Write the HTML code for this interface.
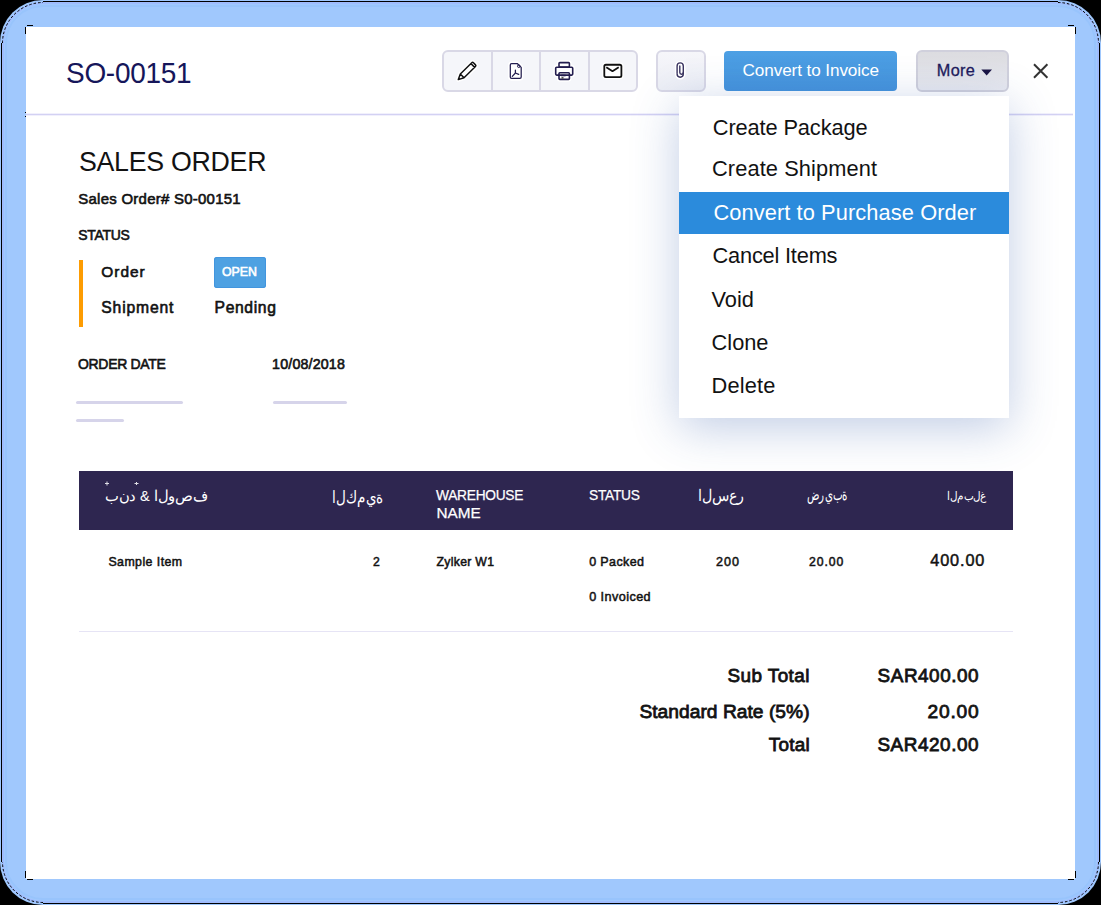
<!DOCTYPE html>
<html><head><meta charset="utf-8"><style>
html,body{margin:0;padding:0}
body{width:1101px;height:905px;position:relative;overflow:hidden;background:#000;font-family:"Liberation Sans",sans-serif}
.t{position:absolute;white-space:nowrap;line-height:1;transform-origin:0 0}
.ar{position:absolute;white-space:nowrap;line-height:1;color:#fff;direction:ltr;unicode-bidi:bidi-override;transform-origin:0 0}
.frame{position:absolute;left:0;top:0;width:1101px;height:905px;border-radius:43px;background:#a0c8fd}
.ln{position:absolute;background:#000}
.white{position:absolute;left:26px;top:27px;width:1049px;height:852px;background:#fff}
.sep{position:absolute;left:26px;top:114px;width:1047px;height:1px;background:#d3d1f3;box-shadow:0 1px 0 #f1f0fc,0 -1px 0 #f1f0fc}
.grp{position:absolute;box-sizing:border-box;left:442px;top:50px;width:196px;height:42px;border:2px solid #d9d8e6;border-radius:6px;background:#f5f6fa}
.dv{position:absolute;top:51px;width:2px;height:40px;background:#d9d8e6}
.attach{position:absolute;box-sizing:border-box;left:656px;top:50px;width:50px;height:42px;border:2px solid #d9d8e6;border-radius:6px;background:linear-gradient(#f6f6fa,#eceef5)}
.conv{position:absolute;left:724px;top:51px;width:173px;height:40px;border-radius:4px;background:linear-gradient(#4da0e4,#4593dc)}
.more{position:absolute;box-sizing:border-box;left:916px;top:50px;width:93px;height:42px;border:2px solid #d0d0dc;border-radius:6px;background:linear-gradient(#dcdce0,#e9eaf1)}
.dd{position:absolute;left:679px;top:96px;width:330px;height:322px;background:#fff;box-shadow:0 10px 44px rgba(50,90,170,0.30)}
.hl{position:absolute;left:679px;top:192px;width:330px;height:42px;background:#2b8bdc}
.thead{position:absolute;left:79px;top:471px;width:934px;height:59px;background:#2e2650}
.rowline{position:absolute;left:79px;top:631px;width:934px;height:1px;background:#e6e4f5}
.orange{position:absolute;left:78.5px;top:260px;width:4px;height:67px;background:#fd9c02}
.badge{position:absolute;left:214px;top:257px;width:52px;height:31px;border-radius:3px;background:#4ea1e2;box-shadow:inset 0 0 0 1px #4295de}
.ph{position:absolute;height:3px;border-radius:2px;background:#d6d4ea}
</style></head><body>
<svg style="position:absolute;left:0;top:0" width="1101" height="905">
<rect x="0" y="0" width="1101" height="905" rx="43" ry="43" fill="#a0c8fd"/>
<rect x="3" y="3" width="1095" height="899" rx="40" ry="40" fill="none" stroke="#9fbcfd" stroke-width="2"/>
<rect x="6" y="6" width="1089" height="893" rx="37" ry="37" fill="none" stroke="#98c4fc" stroke-width="2"/>
<g fill="#000">
<rect x="43" y="1" width="1015" height="1"/><rect x="43" y="903" width="1015" height="1"/>
<rect x="1" y="43" width="1" height="819"/><rect x="1099" y="43" width="1" height="819"/>
<rect x="27" y="25" width="6" height="1"/><rect x="25" y="27" width="1" height="7"/>
<rect x="1068" y="25" width="6" height="1"/><rect x="1075" y="27" width="1" height="7"/>
<rect x="27" y="879" width="6" height="1"/><rect x="25" y="871" width="1" height="7"/>
<rect x="1068" y="879" width="6" height="1"/><rect x="1075" y="871" width="1" height="7"/>
</g>
<g fill="none" stroke="#000" stroke-width="1" stroke-dasharray="2.5 2">
<path d="M2.5 43 A40.5 40.5 0 0 1 43 2.5"/><path d="M1058 2.5 A40.5 40.5 0 0 1 1098.5 43"/>
<path d="M1098.5 862 A40.5 40.5 0 0 1 1058 902.5"/><path d="M43 902.5 A40.5 40.5 0 0 1 2.5 862"/>
</g>
</svg>
<div class="white"></div>
<div class="sep"></div>
<div class="ln" style="position:absolute;background:#000;left:25px;top:112px;width:1px;height:1px"></div><div class="ln" style="position:absolute;background:#000;left:25px;top:116px;width:1px;height:1px"></div>
<div class="grp"></div>
<div class="dv" style="left:491px"></div>
<div class="dv" style="left:539px"></div>
<div class="dv" style="left:588px"></div>
<div class="attach"></div>
<div class="conv"></div>
<div class="more"></div>
<div class="dd"></div>
<div class="hl"></div>
<div class="orange"></div>
<div class="badge"></div>
<div class="ph" style="left:76px;top:401px;width:107px"></div>
<div class="ph" style="left:76px;top:419px;width:48px"></div>
<div class="ph" style="left:273px;top:401px;width:74px"></div>
<div class="thead"></div>
<div class="rowline"></div>
<svg style="position:absolute;left:0;top:0" width="1101" height="905">
<defs>
<g id="pencil"><g transform="translate(458.3,79.6) rotate(-44.3)">
<path d="M0 0 L5.4 -2.65 H21.4 Q22.6 -2.65 22.6 -1.45 V1.45 Q22.6 2.65 21.4 2.65 H5.4 Z M5.4 -2.65 V2.65 M20.2 -2.65 V2.65"/>
</g></g>
<g id="pdf">
<path d="M510.3 65 Q510.3 63.7 511.6 63.7 H517.5 L521.2 67.4 V77.1 Q521.2 78.4 519.9 78.4 H511.6 Q510.3 78.4 510.3 77.1 Z"/>
<path d="M515.4 70 V73 L512.3 76.4 M515.4 73 L518.7 74.4"/>
</g>
<g id="printer">
<rect x="559" y="62.6" width="10.4" height="4.5" rx="0.8"/>
<rect x="555.7" y="67.2" width="17" height="7.9" rx="1"/>
<rect x="559" y="72.7" width="10.4" height="6.7" rx="0.8"/>
<path d="M561.2 75.5 H565.6"/>
</g>
<g id="mail">
<rect x="604.3" y="64.75" width="17.1" height="12.35" rx="1.6"/>
<path d="M606.3 67.3 L612.5 71.2 L618.7 67.3"/>
</g>
<g id="clip">
<path d="M677.1 73.5 V66 A3.1 3.1 0 0 1 683.3 66 V74.1 A3.1 3.1 0 0 1 677.1 74.1"/>
<path d="M679.8 66 V72.5 A1.75 1.75 0 0 0 683.3 72.5"/>
</g>
</defs>
<!-- halos -->
<g fill="none" stroke="#fff" stroke-width="4.5" stroke-linejoin="round" stroke-linecap="round">
<use href="#pencil"/><use href="#pdf"/><use href="#printer"/><use href="#mail"/><use href="#clip"/>
</g>
<g fill="#fff" stroke="none">
<use href="#pencil"/><use href="#pdf"/><use href="#printer"/><use href="#mail"/><use href="#clip"/>
</g>
<g fill="none" stroke="#111" stroke-width="1.5" stroke-linejoin="round"><use href="#pencil"/></g>
<g fill="none" stroke="#231d4f" stroke-width="1.25" stroke-linejoin="round" stroke-linecap="round"><use href="#pdf"/></g>
<circle cx="518.8" cy="66.2" r="1.3" fill="none" stroke="#231d4f" stroke-width="1"/>
<g fill="none" stroke="#231d4f" stroke-width="1.6" stroke-linejoin="round"><use href="#printer"/></g>
<rect x="561.5" y="77" width="2" height="1.8" fill="#555"/>
<g fill="none" stroke="#111" stroke-width="1.8" stroke-linejoin="round"><use href="#mail"/></g>
<g fill="none" stroke="#3a3460" stroke-width="1.4" stroke-linecap="round"><use href="#clip"/></g>
<!-- caret -->
<path d="M981.3 69.4 H992 L986.65 75.4 Z" fill="#1a1545"/>
<!-- close -->
<g stroke="#333" stroke-width="2" stroke-linecap="butt">
<path d="M1034 64.3 L1047.4 77.7 M1047.4 64.3 L1034 77.7"/>
</g>
</svg>

<div class="ar" id="a1" style="left:105.34px;top:489.42px;font-size:17px;transform:scale(0.8602,0.8765)">ب‌ن‌د‌ ‌&‌ ‌ا‌ل‌و‌ص‌ف</div><div class="ar" id="a2" style="left:331.60px;top:488.89px;font-size:17px;transform:scale(0.8000,1.0059)">ا‌ل‌ك‌م‌ي‌ة</div><div class="ar" id="a3" style="left:697.79px;top:487.59px;font-size:17px;transform:scale(0.8111,0.9118)">ا‌ل‌س‌ع‌ر</div><div class="ar" id="a4" style="left:806.87px;top:485.72px;font-size:14px;transform:scale(0.7315,1.1364)">ض‌ر‌ي‌ب‌ة</div><div class="ar" id="a5" style="left:946.68px;top:490.27px;font-size:14px;transform:scale(0.7245,0.8333)">ا‌ل‌م‌ب‌ل‌غ</div><svg style="position:absolute;left:0;top:0" width="1101" height="905"><g stroke="#fff" stroke-width="1" opacity="0.85"><path d="M105 483.5 H109 M107 481.5 V485.5 M134.5 483.5 H138.5 M136.5 482 V485"/></g></svg>
<div class="t" style="left:65.70px;top:57.88px;font-size:29.80px;color:#16165a;letter-spacing:-0.300px;transform:scaleX(0.9391);">SO-00151</div><div class="t" style="left:78.50px;top:147.48px;font-size:28.49px;color:#121212;letter-spacing:-0.300px;transform:scaleX(0.9392);">SALES ORDER</div><div class="t" style="left:78.30px;top:191.63px;font-size:14.97px;color:#121212;letter-spacing:0.256px;-webkit-text-stroke:0.6px #121212;">Sales Order# S0-00151</div><div class="t" style="left:78.30px;top:228.89px;font-size:13.95px;color:#121212;letter-spacing:-0.273px;-webkit-text-stroke:0.6px #121212;">STATUS</div><div class="t" style="left:101.30px;top:264.26px;font-size:15.41px;color:#121212;letter-spacing:1.000px;-webkit-text-stroke:0.6px #121212;">Order</div><div class="t" style="left:222.00px;top:266.14px;font-size:12.35px;color:#fff;letter-spacing:-0.004px;-webkit-text-stroke:0.6px #fff;">OPEN</div><div class="t" style="left:101.30px;top:300.41px;font-size:15.70px;color:#121212;letter-spacing:0.840px;-webkit-text-stroke:0.6px #121212;">Shipment</div><div class="t" style="left:214.60px;top:300.41px;font-size:15.70px;color:#121212;letter-spacing:0.615px;-webkit-text-stroke:0.6px #121212;">Pending</div><div class="t" style="left:78.00px;top:356.64px;font-size:14.24px;color:#121212;letter-spacing:-0.300px;-webkit-text-stroke:0.6px #121212;transform:scaleX(0.9807);">ORDER DATE</div><div class="t" style="left:272.10px;top:356.64px;font-size:14.24px;color:#121212;letter-spacing:0.168px;-webkit-text-stroke:0.6px #121212;">10/08/2018</div><div class="t" style="left:742.50px;top:61.58px;font-size:17.15px;color:#fff;letter-spacing:-0.096px;">Convert to Invoice</div><div class="t" style="left:936.75px;top:62.32px;font-size:16.28px;color:#1d1a5c;letter-spacing:0.339px;-webkit-text-stroke:0.3px #1d1a5c;">More</div><div class="t" style="left:712.75px;top:116.55px;font-size:21.80px;color:#121212;letter-spacing:-0.114px;">Create Package</div><div class="t" style="left:712.00px;top:158.25px;font-size:21.80px;color:#121212;letter-spacing:0.101px;">Create Shipment</div><div class="t" style="left:713.40px;top:201.55px;font-size:21.80px;color:#fff;letter-spacing:0.100px;">Convert to Purchase Order</div><div class="t" style="left:712.50px;top:244.95px;font-size:21.80px;color:#121212;letter-spacing:-0.200px;">Cancel Items</div><div class="t" style="left:711.40px;top:288.55px;font-size:21.80px;color:#121212;letter-spacing:0.059px;">Void</div><div class="t" style="left:711.60px;top:331.95px;font-size:21.80px;color:#121212;letter-spacing:-0.016px;">Clone</div><div class="t" style="left:711.60px;top:375.35px;font-size:21.80px;color:#121212;letter-spacing:0.155px;">Delete</div><div class="t" style="left:436.43px;top:487.02px;font-size:15.33px;color:#fff;letter-spacing:-0.300px;-webkit-text-stroke:0.25px #fff;transform:scaleX(0.8963);">WAREHOUSE</div><div class="t" style="left:436.43px;top:505.05px;font-size:15.30px;color:#fff;letter-spacing:0.000px;-webkit-text-stroke:0.25px #fff;">NAME</div><div class="t" style="left:589.12px;top:487.02px;font-size:15.33px;color:#fff;letter-spacing:-0.300px;-webkit-text-stroke:0.25px #fff;transform:scaleX(0.8984);">STATUS</div><div class="t" style="left:108.45px;top:555.64px;font-size:12.35px;color:#121212;letter-spacing:0.435px;-webkit-text-stroke:0.5px #121212;">Sample Item</div><div class="t" style="left:372.95px;top:555.86px;font-size:12.21px;color:#121212;letter-spacing:0.000px;-webkit-text-stroke:0.5px #121212;">2</div><div class="t" style="left:436.55px;top:555.86px;font-size:12.21px;color:#121212;letter-spacing:0.307px;-webkit-text-stroke:0.5px #121212;">Zylker W1</div><div class="t" style="left:589.15px;top:555.62px;font-size:12.50px;color:#121212;letter-spacing:0.398px;-webkit-text-stroke:0.5px #121212;">0 Packed</div><div class="t" style="left:589.15px;top:590.70px;font-size:12.65px;color:#121212;letter-spacing:0.428px;-webkit-text-stroke:0.5px #121212;">0 Invoiced</div><div class="t" style="left:716.25px;top:555.86px;font-size:12.21px;color:#121212;letter-spacing:1.000px;-webkit-text-stroke:0.5px #121212;transform:scaleX(1.0284);">200</div><div class="t" style="left:808.95px;top:555.86px;font-size:12.21px;color:#121212;letter-spacing:0.963px;-webkit-text-stroke:0.5px #121212;">20.00</div><div class="t" style="left:930.25px;top:552.32px;font-size:16.28px;color:#121212;letter-spacing:0.880px;-webkit-text-stroke:0.5px #121212;">400.00</div><div class="t" style="left:727.40px;top:666.81px;font-size:18.90px;color:#121212;letter-spacing:0.458px;-webkit-text-stroke:0.8px #121212;">Sub Total</div><div class="t" style="left:877.60px;top:666.81px;font-size:18.90px;color:#121212;letter-spacing:0.544px;-webkit-text-stroke:0.8px #121212;">SAR400.00</div><div class="t" style="left:639.40px;top:702.06px;font-size:19.19px;color:#121212;letter-spacing:0.035px;-webkit-text-stroke:0.8px #121212;">Standard Rate (5%)</div><div class="t" style="left:927.60px;top:702.06px;font-size:19.19px;color:#121212;letter-spacing:0.747px;-webkit-text-stroke:0.8px #121212;">20.00</div><div class="t" style="left:768.80px;top:735.81px;font-size:18.90px;color:#121212;letter-spacing:0.223px;-webkit-text-stroke:0.8px #121212;">Total</div><div class="t" style="left:877.40px;top:735.81px;font-size:18.90px;color:#121212;letter-spacing:0.569px;-webkit-text-stroke:0.8px #121212;">SAR420.00</div>
</body></html>
